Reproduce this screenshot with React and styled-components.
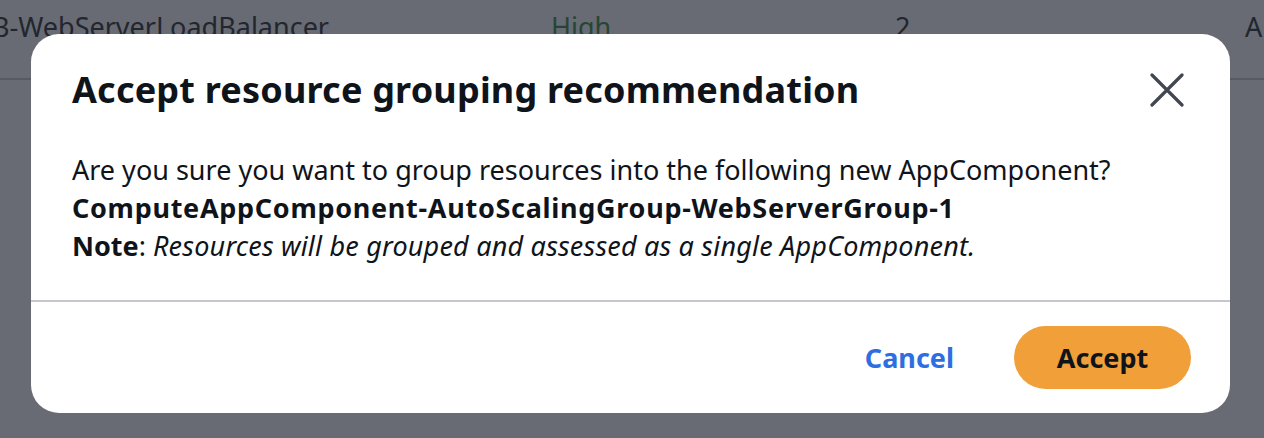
import React from "react"
import styled, { createGlobalStyle } from "styled-components"

const GlobalStyle = createGlobalStyle`
  html, body {
    margin: 0;
    padding: 0;
    background: #686b73;
    font-family: "Noto Sans", "Open Sans", sans-serif;
  }
`

const Page = styled.div`
  position: relative;
  width: 1264px;
  height: 438px;
  overflow: hidden;
  background: #686b73;
`

const TableRow = styled.div`
  display: grid;
  grid-template-columns: 559px 344px 350px 1fr;
  align-items: center;
  height: 80px;
  margin-left: -8px;
  border-bottom: 2px solid #575a61;
  box-sizing: border-box;
  padding-bottom: 26px;
  font-size: 27px;
  color: #22262e;
`

const Cell = styled.div`
  white-space: nowrap;
  color: ${(p) => p.color || "#22262e"};
`

const Overlay = styled.div`
  position: absolute;
  inset: 0;
  display: flex;
  align-items: flex-start;
  justify-content: flex-start;
  padding: 34px 0 0 31px;
`

const Modal = styled.div`
  width: 1199px;
  height: 379px;
  background: #fff;
  border-radius: 28px;
  display: flex;
  flex-direction: column;
  box-sizing: border-box;
`

const Header = styled.div`
  display: flex;
  align-items: center;
  justify-content: space-between;
  padding: 34px 40px 0 41px;
`

const Title = styled.h2`
  margin: 0;
  font-size: 36px;
  font-weight: 700;
  line-height: 44px;
  letter-spacing: 0.2px;
  color: #0f141a;
`

const CloseButton = styled.button`
  border: none;
  background: none;
  padding: 0;
  width: 40px;
  height: 40px;
  display: flex;
  align-items: center;
  justify-content: center;
  margin-right: 3px;
`

const Body = styled.div`
  padding: 39px 41px 0 41px;
  font-size: 27px;
  line-height: 38px;
  color: #0f141a;
  flex: 1;
`

const Line = styled.div`
  white-space: nowrap;
`

const Bold = styled.span`
  font-weight: 700;
  letter-spacing: ${(p) => p.$spacing || "0"};
`

const Italic = styled.span`
  font-style: italic;
  letter-spacing: 0.2px;
`

const Footer = styled.div`
  border-top: 2px solid #c6c6cd;
  display: flex;
  justify-content: flex-end;
  align-items: center;
  gap: 60px;
  padding: 24px 39px 24px 0;
`

const LinkButton = styled.button`
  border: none;
  background: none;
  padding: 0;
  font-family: inherit;
  font-size: 27px;
  font-weight: 700;
  color: #2d6ee0;
`

const PrimaryButton = styled.button`
  border: none;
  background: #f19f38;
  border-radius: 32px;
  width: 177px;
  height: 63px;
  font-family: inherit;
  font-size: 27px;
  font-weight: 700;
  color: #0f141a;
`

export default function App() {
  return (
    <>
      <GlobalStyle />
      <Page>
        <TableRow>
          <Cell>B-WebServerLoadBalancer</Cell>
          <Cell color="#264634">High</Cell>
          <Cell>2</Cell>
          <Cell>A</Cell>
        </TableRow>
        <Overlay>
          <Modal>
            <Header>
              <Title>Accept resource grouping recommendation</Title>
              <CloseButton aria-label="Close">
                <svg width="34" height="34" viewBox="0 0 34 34" fill="none">
                  <path d="M2 2L32 32M32 2L2 32" stroke="#424650" strokeWidth="3.2" strokeLinecap="round" />
                </svg>
              </CloseButton>
            </Header>
            <Body>
              <Line>Are you sure you want to group resources into the following new AppComponent?</Line>
              <Line><Bold $spacing="0.7px">ComputeAppComponent-AutoScalingGroup-WebServerGroup-1</Bold></Line>
              <Line><Bold>Note</Bold>: <Italic>Resources will be grouped and assessed as a single AppComponent.</Italic></Line>
            </Body>
            <Footer>
              <LinkButton>Cancel</LinkButton>
              <PrimaryButton>Accept</PrimaryButton>
            </Footer>
          </Modal>
        </Overlay>
      </Page>
    </>
  )
}
